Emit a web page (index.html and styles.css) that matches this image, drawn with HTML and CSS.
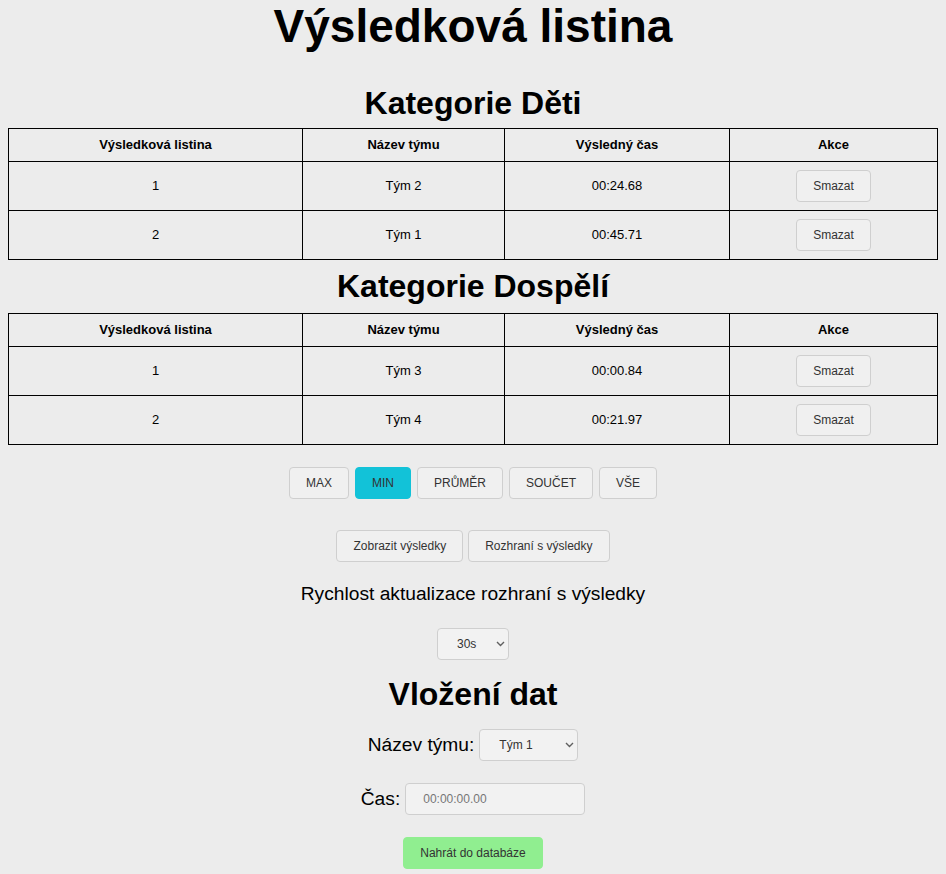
FILE: index.html
```html
<!DOCTYPE html>
<html lang="cs">
<head>
<meta charset="utf-8">
<title>Výsledková listina</title>
<link rel="stylesheet" href="styles.css">
</head>
<body>
<h1 class="title">Výsledková listina</h1>

<h2 class="cat">Kategorie Děti</h2>
<table class="results">
  <colgroup><col class="c1"><col class="c2"><col class="c3"><col class="c4"></colgroup>
  <thead>
    <tr><th>Výsledková listina</th><th>Název týmu</th><th>Výsledný čas</th><th>Akce</th></tr>
  </thead>
  <tbody>
    <tr><td>1</td><td>Tým 2</td><td>00:24.68</td><td><button class="btn">Smazat</button></td></tr>
    <tr><td>2</td><td>Tým 1</td><td>00:45.71</td><td><button class="btn">Smazat</button></td></tr>
  </tbody>
</table>

<h2 class="cat cat2">Kategorie Dospělí</h2>
<table class="results">
  <colgroup><col class="c1"><col class="c2"><col class="c3"><col class="c4"></colgroup>
  <thead>
    <tr><th>Výsledková listina</th><th>Název týmu</th><th>Výsledný čas</th><th>Akce</th></tr>
  </thead>
  <tbody>
    <tr><td>1</td><td>Tým 3</td><td>00:00.84</td><td><button class="btn">Smazat</button></td></tr>
    <tr><td>2</td><td>Tým 4</td><td>00:21.97</td><td><button class="btn">Smazat</button></td></tr>
  </tbody>
</table>

<div class="filters">
  <button class="btn fbtn">MAX</button>
  <button class="btn fbtn active">MIN</button>
  <button class="btn fbtn">PRŮMĚR</button>
  <button class="btn fbtn">SOUČET</button>
  <button class="btn fbtn">VŠE</button>
</div>

<div class="links">
  <button class="btn lbtn">Zobrazit výsledky</button>
  <button class="btn lbtn">Rozhraní s výsledky</button>
</div>

<p class="speed-label">Rychlost aktualizace rozhraní s výsledky</p>
<div class="speed">
  <span class="selwrap">
    <select class="sel sel-speed">
      <option>30s</option>
      <option>10s</option>
      <option>60s</option>
    </select>
    <svg class="chev" width="9" height="6" viewBox="0 0 9 6"><polyline points="1,1 4.5,4.5 8,1" fill="none" stroke="#606060" stroke-width="1.4"/></svg>
  </span>
</div>

<h2 class="insert">Vložení dat</h2>
<form class="form">
  <div class="row">
    <label class="lbl" for="team">Název týmu:</label>
    <span class="selwrap">
      <select id="team" class="sel sel-team">
        <option>Tým 1</option>
        <option>Tým 2</option>
        <option>Tým 3</option>
        <option>Tým 4</option>
      </select>
      <svg class="chev" width="9" height="6" viewBox="0 0 9 6"><polyline points="1,1 4.5,4.5 8,1" fill="none" stroke="#606060" stroke-width="1.4"/></svg>
    </span>
  </div>
  <div class="row">
    <label class="lbl" for="time">Čas:</label>
    <input id="time" class="inp" type="text" placeholder="00:00:00.00">
  </div>
  <div class="row">
    <button type="button" class="btn submit">Nahrát do databáze</button>
  </div>
</form>
</body>
</html>
```

FILE: styles.css
```css
html, body {
  margin: 0;
  background: #ececec;
}
body {
  padding: 0 8px;
  font-family: "Liberation Sans", Arial, sans-serif;
  color: #000;
}
.title {
  margin: 0;
  text-align: center;
  font-size: 46px;
  font-weight: bold;
  line-height: 53px;
}
.cat {
  margin: 32px 0 6px;
  text-align: center;
  font-size: 32px;
  line-height: 37px;
}
.cat2 {
  margin-top: 8px;
  margin-bottom: 8px;
}
.results {
  width: 100%;
  border-collapse: collapse;
  table-layout: fixed;
  font-size: 13px;
}
.c1 { width: 294px; }
.c2 { width: 202px; }
.c3 { width: 225px; }
.results th, .results td {
  border: 1px solid #000;
  text-align: center;
  vertical-align: middle;
  padding: 8px;
  line-height: 16px;
}
.results td { height: 32px; box-sizing: content-box; }
.results th { font-weight: bold; }
.results .btn { vertical-align: middle; }
.btn {
  font-family: "Liberation Sans", Arial, sans-serif;
  font-size: 12px;
  color: #333;
  background: #f0f0f0;
  border: 1px solid #cfcfcf;
  border-radius: 4px;
  padding: 0 16px;
  line-height: 15px;
  height: 32px;
  box-sizing: border-box;
  cursor: pointer;
}
.filters {
  display: flex;
  justify-content: center;
  gap: 6px;
  margin-top: 22px;
}
.fbtn.active {
  background: #12c2d8;
  border-color: #12c2d8;
}
.links {
  display: flex;
  justify-content: center;
  gap: 5px;
  margin-top: 31px;
}
.speed-label {
  margin: 21px 0 0;
  text-align: center;
  font-size: 19.2px;
  line-height: 22px;
}
.speed {
  display: flex;
  justify-content: center;
  margin-top: 23px;
}
.selwrap {
  position: relative;
  display: inline-flex;
}
.sel {
  appearance: none;
  -webkit-appearance: none;
  font-family: "Liberation Sans", Arial, sans-serif;
  font-size: 12px;
  color: #333;
  background: #f2f2f2;
  border: 1px solid #cfcfcf;
  border-radius: 4px;
  height: 32px;
  box-sizing: border-box;
  margin: 0;
  padding: 0 14px 0 19px;
}
.chev {
  position: absolute;
  right: 4px;
  top: 13px;
  pointer-events: none;
}
.sel-speed { width: 72px; }
.sel-team { width: 99px; }
.insert {
  margin: 16px 0 0;
  text-align: center;
  font-size: 32px;
  line-height: 37px;
}
.form {
  display: flex;
  flex-direction: column;
  align-items: center;
  gap: 22px;
  margin-top: 16px;
}
.row {
  display: flex;
  align-items: center;
  gap: 5px;
}
.lbl {
  font-size: 19.2px;
  line-height: 22px;
}
.inp {
  font-family: "Liberation Sans", Arial, sans-serif;
  font-size: 12px;
  width: 180px;
  height: 32px;
  box-sizing: border-box;
  margin: 0;
  background: #f2f2f2;
  border: 1px solid #cfcfcf;
  border-radius: 4px;
  padding: 0 17px;
  color: #333;
}
.inp::placeholder { color: #767676; }
.submit {
  width: 140px;
  padding: 0;
  background: #90ee90;
  border-color: #90ee90;
}
```
